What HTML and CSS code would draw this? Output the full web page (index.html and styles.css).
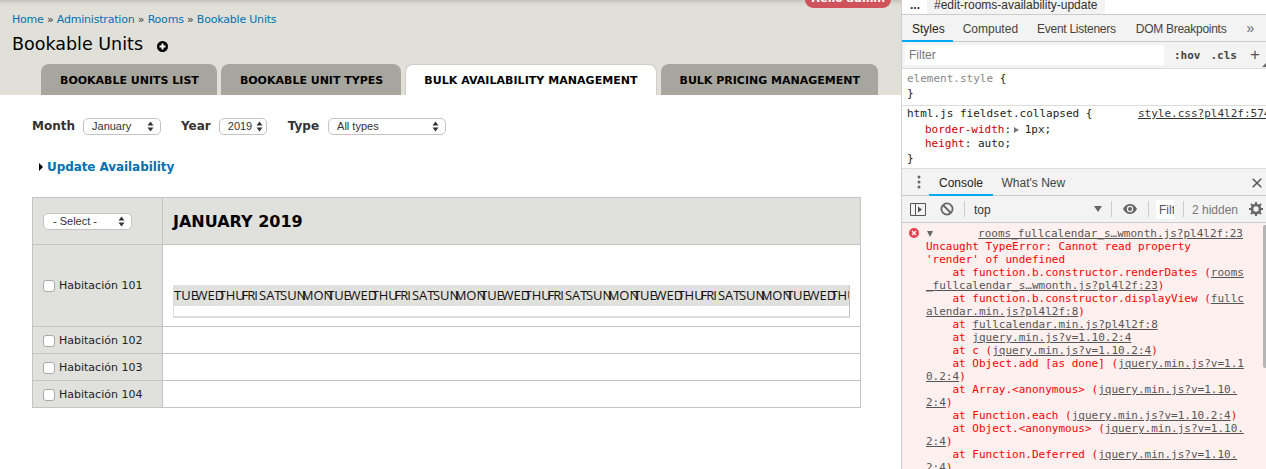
FILE: index.html
```html
<!DOCTYPE html>
<html lang="en">
<head>
<meta charset="utf-8">
<title>Bookable Units</title>
<link rel="stylesheet" href="styles.css">
</head>
<body>
<div class="page">
  <main class="site">
    <header class="head">
      <div class="hello">Hello admin</div>
      <nav class="crumbs"><a>Home</a> <b>»</b> <a>Administration</a> <b>»</b> <a>Rooms</a> <b>»</b> <a>Bookable Units</a></nav>
      <div class="title-row">
        <h1>Bookable Units</h1>
        <svg class="plus" width="11" height="11" viewBox="0 0 11 11"><circle cx="5.5" cy="5.5" r="5.5" fill="#000"/><path d="M2.5 5.5h6M5.500 2.500v6" stroke="#fff" stroke-width="2"/></svg>
      </div>
      <ul class="tabs">
        <li class="tab">BOOKABLE UNITS LIST</li>
        <li class="tab">BOOKABLE UNIT TYPES</li>
        <li class="tab active">BULK AVAILABILITY MANAGEMENT</li>
        <li class="tab">BULK PRICING MANAGEMENT</li>
      </ul>
    </header>
    <section class="content">
      <form class="filters">
        <label class="flabel">Month</label>
        <div class="sel sel-month"><span>January</span><svg width="7" height="11" viewBox="0 0 7 11"><path d="M3.500 0.500L6.500 4.500H0.500zM3.500 10.500L0.500 6.500H6.500z" fill="#333"/></svg></div>
        <label class="flabel l-year">Year</label>
        <div class="sel sel-year"><span>2019</span><svg width="7" height="11" viewBox="0 0 7 11"><path d="M3.500 0.500L6.500 4.500H0.500zM3.500 10.500L0.500 6.500H6.500z" fill="#333"/></svg></div>
        <label class="flabel l-type">Type</label>
        <div class="sel sel-type"><span>All types</span><svg width="7" height="11" viewBox="0 0 7 11"><path d="M3.500 0.500L6.500 4.500H0.500zM3.500 10.500L0.500 6.500H6.500z" fill="#333"/></svg></div>
      </form>
      <div class="fieldset"><i class="tri"></i><a>Update Availability</a></div>
      <div class="grid">
        <div class="cell side hdr"><div class="sel sel-select"><span>- Select -</span><svg width="7" height="11" viewBox="0 0 7 11"><path d="M3.500 0.500L6.500 4.500H0.500zM3.500 10.500L0.500 6.500H6.500z" fill="#333"/></svg></div></div>
        <div class="cell main hdr"><h2>JANUARY 2019</h2></div>
        <div class="cell side r1"><i class="check"></i><span>Habitación 101</span></div>
        <div class="cell main r1">
          <div class="cal">
            <div class="cal-head"><span class="tue">TUE</span><span class="wed">WED</span><span class="thu">THU</span><span class="fri">FRI</span><span class="sat">SAT</span><span class="sun">SUN</span><span class="mon">MON</span><span class="tue">TUE</span><span class="wed">WED</span><span class="thu">THU</span><span class="fri">FRI</span><span class="sat">SAT</span><span class="sun">SUN</span><span class="mon">MON</span><span class="tue">TUE</span><span class="wed">WED</span><span class="thu">THU</span><span class="fri">FRI</span><span class="sat">SAT</span><span class="sun">SUN</span><span class="mon">MON</span><span class="tue">TUE</span><span class="wed">WED</span><span class="thu">THU</span><span class="fri">FRI</span><span class="sat">SAT</span><span class="sun">SUN</span><span class="mon">MON</span><span class="tue">TUE</span><span class="wed">WED</span><span class="thu">THU</span></div>
            <div class="cal-body"></div>
          </div>
        </div>
        <div class="cell side rn"><i class="check"></i><span>Habitación 102</span></div>
        <div class="cell main rn"></div>
        <div class="cell side rn"><i class="check"></i><span>Habitación 103</span></div>
        <div class="cell main rn"></div>
        <div class="cell side rn"><i class="check"></i><span>Habitación 104</span></div>
        <div class="cell main rn"></div>
      </div>
    </section>
  </main>
  <aside class="dev">
    <div class="dev-crumbs"><span class="dots">...</span><span class="crumb-sel">#edit-rooms-availability-update</span></div>
    <div class="dev-tabs">
      <span class="dtab on">Styles</span><span class="dtab comp">Computed</span><span class="dtab tight">Event Listeners</span><span class="dtab tight">DOM Breakpoints</span><span class="chev">»</span>
    </div>
    <div class="filter-row"><div class="filter-input">Filter</div><span class="hov">:hov</span><span class="cls">.cls</span><span class="add">+</span><i class="corner"></i></div>
    <div class="rule r-el"><div><span class="muted">element.style</span> {</div><div>}</div></div>
    <div class="rule r-css">
      <a class="src">style.css?pl4l2f:574</a>
      <div class="sel-line">html.js fieldset.collapsed {</div>
      <div class="prop"><span class="pn">border-width</span>:<i class="ptri"></i> 1px;</div>
      <div class="prop"><span class="pn">height</span>: auto;</div>
      <div>}</div>
    </div>
    <div class="drawer-tabs">
      <svg class="kebab" width="4" height="14" viewBox="0 0 4 14"><circle cx="2" cy="2" r="1.500" fill="#666"/><circle cx="2" cy="7" r="1.500" fill="#666"/><circle cx="2" cy="12" r="1.500" fill="#666"/></svg>
      <span class="ctab on">Console</span><span class="ctab">What's New</span>
      <svg class="close" width="10" height="10" viewBox="0 0 10 10"><path d="M.7.700l8.600 8.600M9.300.700L.7 9.300" stroke="#555" stroke-width="1.500"/></svg>
    </div>
    <div class="toolbar">
      <svg class="t-side" width="16" height="13" viewBox="0 0 16 13"><path d="M.5.500h15v12H.5zM5.500.500v12" fill="none" stroke="#555"/><path d="M8 3.500l4 3-4 3z" fill="#555"/></svg>
      <svg class="t-block" width="14" height="14" viewBox="0 0 14 14"><circle cx="7" cy="7" r="5.600" fill="none" stroke="#666" stroke-width="1.800"/><path d="M3 3l8 8" stroke="#666" stroke-width="1.800"/></svg>
      <i class="sep s1"></i>
      <span class="top">top</span>
      <i class="drop"></i>
      <i class="sep s2"></i>
      <svg class="t-eye" width="16" height="10" viewBox="0 0 16 10"><path d="M1 5c1.800-3.200 4.200-5 7-5s5.200 1.800 7 5c-1.800 3.200-4.200 5-7 5S2.800 8.200 1 5z" fill="#666"/><circle cx="8" cy="5" r="3.200" fill="#f3f3f3"/><circle cx="8" cy="5" r="2" fill="#666"/></svg>
      <i class="sep s3"></i>
      <span class="filt">Filt</span>
      <i class="sep s4"></i>
      <span class="hidden-count">2 hidden</span>
      <svg class="t-gear" width="14" height="14" viewBox="0 0 14 14"><circle cx="7" cy="7" r="4" fill="none" stroke="#666" stroke-width="2.600"/><path d="M7 0v3M7 11v3M0 7h3M11 7h3M2 2l2.200 2.200M9.800 9.800L12 12M12 2L9.800 4.200M4.200 9.800L2 12" stroke="#666" stroke-width="2.200"/></svg>
    </div>
    <div class="console">
      <div class="scroll"></div>
      <svg class="err" width="10" height="10" viewBox="0 0 10 10"><circle cx="5" cy="5" r="5" fill="#e8404c"/><path d="M3 3l4 4M7 3L3 7" stroke="#fff" stroke-width="1.400"/></svg>
      <i class="open"></i>
      <div class="log">
        <div class="ln right"><a>rooms_fullcalendar_s…wmonth.js?pl4l2f:23</a></div>
        <div class="ln">Uncaught TypeError: Cannot read property</div>
        <div class="ln">'render' of undefined</div>
        <div class="ln">    at function.b.constructor.renderDates (<a>rooms</a></div>
        <div class="ln"><a>_fullcalendar_s…wmonth.js?pl4l2f:23</a>)</div>
        <div class="ln">    at function.b.constructor.displayView (<a>fullc</a></div>
        <div class="ln"><a>alendar.min.js?pl4l2f:8</a>)</div>
        <div class="ln">    at <a>fullcalendar.min.js?pl4l2f:8</a></div>
        <div class="ln">    at <a>jquery.min.js?v=1.10.2:4</a></div>
        <div class="ln">    at c (<a>jquery.min.js?v=1.10.2:4</a>)</div>
        <div class="ln">    at Object.add [as done] (<a>jquery.min.js?v=1.1</a></div>
        <div class="ln"><a>0.2:4</a>)</div>
        <div class="ln">    at Array.&lt;anonymous&gt; (<a>jquery.min.js?v=1.10.</a></div>
        <div class="ln"><a>2:4</a>)</div>
        <div class="ln">    at Function.each (<a>jquery.min.js?v=1.10.2:4</a>)</div>
        <div class="ln">    at Object.&lt;anonymous&gt; (<a>jquery.min.js?v=1.10.</a></div>
        <div class="ln"><a>2:4</a>)</div>
        <div class="ln">    at Function.Deferred (<a>jquery.min.js?v=1.10.</a></div>
        <div class="ln"><a>2:4</a>)</div>
      </div>
    </div>
  </aside>
</div>
</body>
</html>
```
FILE: styles.css
```css
* { box-sizing: border-box; }
html, body { margin: 0; height: 469px; overflow: hidden; background: #fff; }
i { display: block; font-style: normal; }
.page { display: flex; height: 469px; }
.site { width: 901px; flex: none; font-family: "DejaVu Sans", sans-serif; color: #000; }
.head { position: relative; height: 95px; background: linear-gradient(#c4c4be 0, #dcdcd5 4px, #e0e0d8 7px); padding: 13px 0 0 12px; }
.hello { position: absolute; left: 805px; top: -8px; width: 86px; height: 16px; border-radius: 0 0 9px 9px / 0 0 8px 8px; background: #d0525a; color: #fff; font: bold 11px/14px "DejaVu Sans", sans-serif; text-align: center; }
.crumbs { font-size: 11px; letter-spacing: -0.200px; line-height: 14px; height: 14px; color: #333; white-space: nowrap; }
.crumbs a { color: #0071b3; }
.crumbs b { font-weight: normal; }
.title-row { display: flex; align-items: center; margin-top: 5px; height: 24px; }
h1 { margin: 0; font-size: 17.500px; font-weight: normal; line-height: 24px; white-space: nowrap; }
.plus { margin: 5px 0 0 14px; }
.tabs { list-style: none; display: flex; gap: 4px; margin: 8px 0 0 29px; padding: 0; }
.tab { height: 31px; padding: 0 18px 0 19px; border-radius: 8px 8px 0 0; background: #a6a69f; font-weight: bold; font-size: 11px; line-height: 33px; white-space: nowrap; }
.tab.active { background: #fff; border: 1px solid #cfcfc8; border-bottom: 0; line-height: 31px; padding: 0 18px; letter-spacing: 0.040px; }
.content { padding: 22px 0 0 32px; }
.filters { display: flex; align-items: center; height: 18px; }
.flabel { font-weight: bold; font-size: 12px; color: #333; margin-right: 8px; }
.l-year { margin-left: 20px; margin-right: 8px; }
.l-type { margin-left: 21px; margin-right: 9px; }
.sel { display: flex; align-items: center; justify-content: space-between; height: 17px; background: #fff; border: 1px solid #c4c4c4; border-radius: 5px; padding: 0 6px 0 8px; font: 11px "Liberation Sans", sans-serif; color: #333; }
.sel-month { width: 78px; }
.sel-year { width: 48px; padding-right: 3px; }
.sel-type { width: 118px; }
.sel-select { width: 89px; padding-left: 9px; }
.fieldset { display: flex; align-items: center; margin: 23px 0 0 7px; height: 18px; font-weight: bold; font-size: 12px; letter-spacing: -0.080px; color: #0071b3; }
.tri { width: 0; height: 0; border-left: 4px solid #000; border-top: 4px solid transparent; border-bottom: 4px solid transparent; margin-right: 4px; }
.grid { display: grid; grid-template-columns: 130px 698px; margin-top: 21px; width: 829px; border-top: 1px solid #c4c4c4; border-left: 1px solid #c4c4c4; }
.cell { border-right: 1px solid #c4c4c4; border-bottom: 1px solid #c4c4c4; }
.side { background: #e0e0dc; display: flex; align-items: center; padding-left: 10px; font-size: 11px; color: #222; }
.hdr { height: 47px; background: #e0e0dc; }
.r1 { height: 82px; }
.rn { height: 27px; }
.main.hdr { display: flex; align-items: center; padding-left: 10px; }
h2 { margin: 0; font-size: 16px; font-weight: bold; }
.check { width: 12px; height: 12px; border: 1px solid #aaa; border-radius: 3px; background: #fff; margin-right: 4px; margin-top: 1px; }
.cal { width: 677px; margin: 40px 0 0 10px; height: 33px; background: #fff; border-right: 1px solid #c4c4c4; border-left: 1px solid #ddd; border-bottom: 2px solid #ddd; }
.cal-head { display: flex; height: 21px; overflow: hidden; background: repeating-linear-gradient(90deg, #e0e0dc 0, #e0e0dc 20.860px, #e8e8e5 20.860px, #e8e8e5 21.860px); font: 13px/21px "Open Sans", sans-serif; color: #111; }
.cal-head span { flex: none; white-space: nowrap; }
.tue { width: 21.500px; }
.wed { width: 23px; }
.thu { width: 23px; }
.cal-head .fri { width: 17.500px; letter-spacing: -1px; }
.sat { width: 21px; }
.sun { width: 21.700px; }
.mon { width: 25.300px; }
.dev { position: relative; flex: 1; min-width: 0; border-left: 1px solid #cfcfcf; background: #fff; font: 12px "Liberation Sans", sans-serif; color: #303030; overflow: hidden; }
.dev-crumbs { display: flex; height: 15px; border-bottom: 1px solid #ccc; line-height: 10px; font-size: 12px; }
.dots { width: 25px; padding-left: 8px; font-weight: bold; }
.crumb-sel { background: #f3f3f3; padding: 0 8px 0 7px; width: 178px; height: 14px; white-space: nowrap; }
.dev-tabs { display: flex; align-items: center; height: 27px; background: #f3f3f3; border-bottom: 1px solid #ccc; position: relative; font-size: 12px; color: #444; white-space: nowrap; }
.dtab { padding: 0 10px; line-height: 28px; height: 27px; }
.dtab.on { color: #222; border-bottom: 2px solid #03a9f4; padding-right: 8px; }
.comp { padding-right: 9px; }
.tight { letter-spacing: -0.270px; }
.chev { margin-left: 10px; font-size: 14px; color: #666; }
.filter-row { display: flex; align-items: center; position: relative; height: 27px; background: #f3f3f3; border-bottom: 1px solid #ddd; padding-left: 3px; }
.filter-input { width: 259px; height: 20px; background: #fff; padding-left: 4px; line-height: 21px; color: #777; }
.hov, .cls { font: bold 11px "DejaVu Sans Mono", monospace; color: #444; padding-top: 1px; }
.hov { margin-left: 10px; }
.cls { margin-left: 10px; }
.add { margin-left: 13px; font-size: 17px; color: #555; line-height: 18px; }
.corner { position: absolute; right: 0; bottom: 1px; width: 0; height: 0; border-left: 4px solid transparent; border-bottom: 4px solid #666; }
.rule { font: 11px/15px "DejaVu Sans Mono", monospace; color: #222; padding: 1px 0 0 5px; position: relative; border-bottom: 1px solid #ddd; }
.rule div { white-space: pre; }
.r-el { height: 37px; padding-top: 2px; }
.r-css { height: 63px; padding-top: 1px; line-height: 14.500px; }
.sel-line { margin-bottom: 1px; }
.muted { color: #888; }
.src { position: absolute; left: 236px; top: 1px; width: 130px; overflow: hidden; text-decoration: underline; color: #333; white-space: nowrap; }
.prop { padding-left: 18px; display: flex; align-items: center; }
.pn { color: #c80000; }
.ptri { width: 0; height: 0; border-left: 5px solid #777; border-top: 3.500px solid transparent; border-bottom: 3.500px solid transparent; margin: 0 -1px 0 3px; }
.drawer-tabs { position: relative; display: flex; height: 27px; background: #f3f3f3; border-bottom: 1px solid #ccc; align-items: center; font-size: 12px; color: #444; white-space: nowrap; }
.kebab { margin: 0 0 0 15px; flex: none; }
.ctab { padding: 0 8.500px; line-height: 28px; height: 27px; }
.ctab.on { color: #222; border-bottom: 2px solid #03a9f4; margin-left: 8px; padding: 0 10px; }
.close { position: absolute; right: 4px; top: 9px; }
.toolbar { position: relative; height: 27px; background: #f3f3f3; border-bottom: 1px solid #ccc; display: flex; align-items: center; font-size: 12px; color: #333; }
.t-side { margin-left: 8px; flex: none; }
.t-block { margin-left: 14px; flex: none; }
.sep { width: 1px; height: 16px; background: #ccc; flex: none; }
.s1 { margin-left: 10px; }
.top { margin-left: 9px; width: 120px; padding-top: 2px; }
.drop { width: 0; height: 0; border-top: 6px solid #666; border-left: 4px solid transparent; border-right: 4px solid transparent; }
.s2 { margin-left: 9px; }
.t-eye { margin-left: 10px; flex: none; }
.s3 { margin-left: 10px; }
.filt { margin-left: 7px; background: #fff; width: 18px; height: 19px; line-height: 20px; overflow: hidden; padding-left: 3px; color: #555; }
.s4 { margin-left: 9px; }
.hidden-count { margin-left: 8px; color: #777; white-space: nowrap; width: 57px; padding-top: 2px; }
.t-gear { flex: none; }
.console { position: relative; height: 250px; background: #fff0f0; font: 11px/13px "DejaVu Sans Mono", monospace; color: #f00; overflow: hidden; padding: 4px 0 0 24px; }
.log { width: 320px; }
.ln { white-space: pre; height: 13px; }
.ln a { color: #555; text-decoration: underline; }
.right { text-align: right; padding-right: 1px; width: 318px; }
.err { position: absolute; left: 7px; top: 5px; }
.open { position: absolute; left: 25px; top: 8px; width: 0; height: 0; border-top: 6px solid #666; border-left: 3.500px solid transparent; border-right: 3.500px solid transparent; }
.scroll { position: absolute; right: 0; top: 2px; width: 3px; height: 143px; background: #b5b5b5; border-radius: 2px 0 0 2px; }
```
